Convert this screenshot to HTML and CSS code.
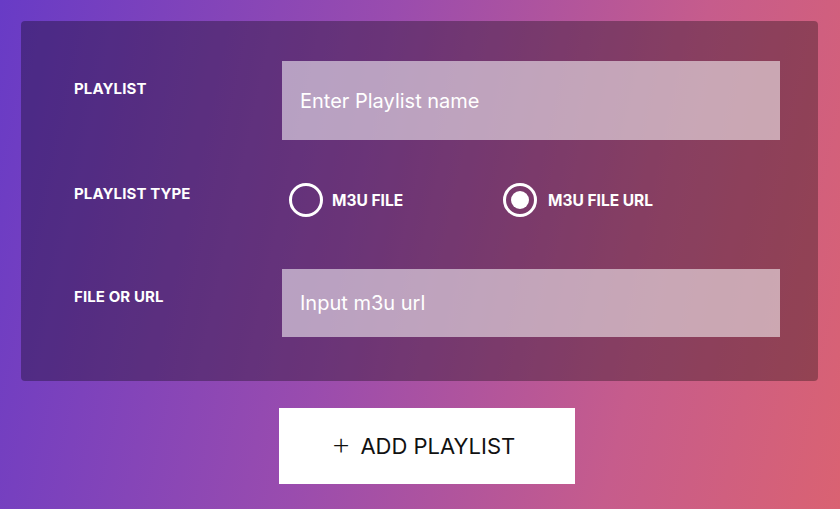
FILE: index.html
```html
<!DOCTYPE html>
<html lang="en">
<head>
  <meta charset="UTF-8">
  <meta name="viewport" content="width=device-width, initial-scale=1.0">
  <link rel="stylesheet" href="styles.css">
  <title>Add Playlist</title>
</head>
<body>
  <div class="page">
    <form class="card">
      <div class="row row-name">
        <label class="label" for="name">PLAYLIST</label>
        <input type="text" id="name" class="form-control tall" placeholder="Enter Playlist name">
      </div>
      <div class="row row-type">
        <span class="label">PLAYLIST TYPE</span>
        <div class="radios">
          <label class="radio">
            <input type="radio" name="type" value="file">
            <span class="dot"></span>
            M3U FILE
          </label>
          <label class="radio">
            <input type="radio" name="type" value="url" checked>
            <span class="dot"></span>
            M3U FILE URL
          </label>
        </div>
      </div>
      <div class="row row-url">
        <label class="label" for="url">FILE OR URL</label>
        <input type="text" id="url" class="form-control" placeholder="Input m3u url">
      </div>
    </form>
    <div class="actions">
      <a href="#" class="btn"><span class="plus">+</span>ADD PLAYLIST</a>
    </div>
  </div>
</body>
</html>
```

FILE: styles.css
```css
*, ::after, ::before {
  box-sizing: border-box;
}
html, body {
  height: 100%;
}
body {
  margin: 0;
  padding: 0;
  background: linear-gradient(102deg, #683bc6 0%, #9a4cae 42%, #c65c8c 75%, #da6272 100%);
  color: #fff;
  font-family: "Inter", "Helvetica Neue", Arial, sans-serif;
  overflow: hidden;
}
.page {
  padding: 21px 22px 0 21px;
}
.card {
  margin: 0;
  height: 360px;
  padding: 40px 38px 0 53px;
  border-radius: 4px;
  background: rgba(0, 0, 0, 0.31);
}
.row {
  display: flex;
  align-items: flex-start;
}
.label {
  width: 208px;
  flex: none;
  font-size: 15px;
  font-weight: 700;
  letter-spacing: 0.1px;
  color: #fff;
}
.row-name .label {
  padding-top: 18px;
}
.row-type {
  margin-top: 43px;
}
.row-type .label {
  padding-top: 1px;
}
.row-url {
  margin-top: 52px;
}
.row-url .label {
  padding-top: 18px;
}
.form-control {
  flex: 1;
  height: 68px;
  border: none;
  outline: none;
  padding: 0 18px;
  background: rgba(255, 255, 255, 0.54);
  color: #fff;
  font-family: inherit;
  font-size: 20px;
}
.form-control.tall {
  height: 79px;
}
.form-control::placeholder {
  color: #fff;
}
.radios {
  display: flex;
  padding-left: 7px;
}
.radio {
  display: flex;
  align-items: center;
  width: 214px;
  font-size: 15.5px;
  font-weight: 700;
  cursor: pointer;
}
.radio input {
  display: none;
}
.dot {
  width: 34px;
  height: 34px;
  margin-right: 9px;
  border: 3px solid #fff;
  border-radius: 50%;
  display: flex;
  align-items: center;
  justify-content: center;
}
.radio input:checked + .dot {
  margin-right: 11px;
}
.radio input:checked + .dot::after {
  content: "";
  width: 18px;
  height: 18px;
  border-radius: 50%;
  background: #fff;
}
.actions {
  padding: 27px 0 0 258px;
}
.btn {
  width: 296px;
  height: 76px;
  display: flex;
  align-items: center;
  justify-content: center;
  padding-right: 8px;
  background: #fff;
  color: #111;
  font-size: 22px;
  font-weight: 400;
  text-decoration: none;
}
.plus {
  font-size: 32px;
  font-weight: 200;
  line-height: 1;
  margin-right: 9px;
  margin-top: -4px;
}
```
